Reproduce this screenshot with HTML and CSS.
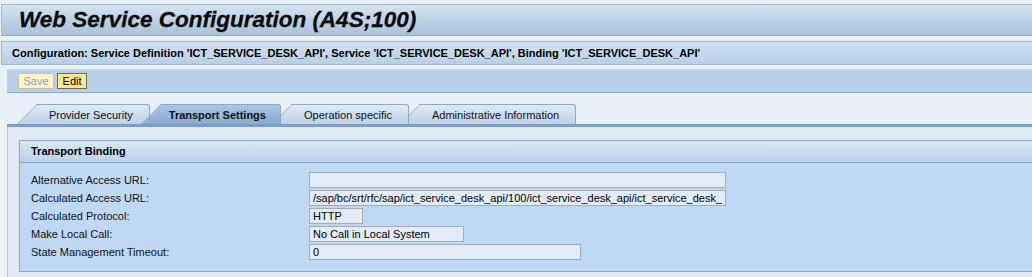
FILE: index.html
```html
<!DOCTYPE html>
<html lang="en">
<head>
  <meta charset="UTF-8" />
  <title>Web Service Configuration (A4S;100)</title>
  <link rel="stylesheet" href="styles.css">
</head>
<body>

  <div class="titlebar">Web Service Configuration (A4S;100)</div>

  <div class="infobar">Configuration: Service Definition 'ICT_SERVICE_DESK_API', Service 'ICT_SERVICE_DESK_API', Binding 'ICT_SERVICE_DESK_API'</div>

  <div class="toolbar">
    <button class="btn disabled" disabled>Save</button>
    <button class="btn">Edit</button>
  </div>

  <div class="tabs">
    <div class="tab">Provider Security</div>
    <div class="tab active">Transport Settings</div>
    <div class="tab">Operation specific</div>
    <div class="tab">Administrative Information</div>
  </div>

  <div class="panel">
    <div class="group">
      <div class="group-head">Transport Binding</div>
      <div class="group-body">
        <label>Alternative Access URL:</label>
        <input class="field wide" type="text" readonly value="">

        <label>Calculated Access URL:</label>
        <input class="field wide" type="text" readonly value="/sap/bc/srt/rfc/sap/ict_service_desk_api/100/ict_service_desk_api/ict_service_desk_api">

        <label>Calculated Protocol:</label>
        <input class="field small" type="text" readonly value="HTTP">

        <label>Make Local Call:</label>
        <input class="field medium" type="text" readonly value="No Call in Local System">

        <label>State Management Timeout:</label>
        <input class="field large" type="text" readonly value="0">
      </div>
    </div>
  </div>

</body>
</html>
```

FILE: styles.css
```css
body {
  margin: 0;
  background-color: #eaf0f7;
  font-family: "Liberation Sans", Arial, sans-serif;
  font-size: 11px;
  color: #000;
  overflow: hidden;
}

.titlebar {
  margin: 4px 0 0 1px;
  height: 30px;
  line-height: 30px;
  padding-left: 17px;
  border: 1px solid #a4b7cb;
  border-right: none;
  border-bottom-color: #94abc3;
  background: linear-gradient(#d5e3f1, #aac2da);
  font-size: 22.5px;
  font-weight: bold;
  font-style: italic;
  color: #0a0a0a;
  -webkit-text-stroke: 0.3px #0a0a0a;
}

.infobar {
  margin: 5px 0 0 1px;
  height: 22px;
  line-height: 22px;
  padding-left: 10px;
  border: 1px solid #a2b6ca;
  border-right: none;
  background: linear-gradient(#d3e2f0, #b9cfe6);
  font-weight: bold;
}

.toolbar {
  margin: 4px 0 0 7px;
  height: 22px;
  padding-left: 11px;
  display: flex;
  align-items: center;
  gap: 3px;
  border-top: 1px solid #c9d9ea;
  border-bottom: 1px solid #8da8c6;
  background-color: #b8cfe7;
}

.btn {
  height: 16px;
  padding: 0 4.5px;
  font: 11px "Liberation Sans", Arial, sans-serif;
  line-height: 14px;
  color: #000;
  background-color: #fde78c;
  border: 1px solid #6f6a55;
  border-radius: 0;
}

.btn.disabled {
  color: #9c9c9c;
  background-color: #fdf4cf;
  border-color: #c8c2a6;
}

/* tab strip */
.tabs {
  margin: 11px 0 0 7px;
  padding-left: 30px;
  display: flex;
  border-bottom: 3px solid #7d9dc6;
}

.tab {
  position: relative;
  z-index: 1;
  height: 19px;
  line-height: 20px;
  margin-left: 11px;
  padding: 0 16px 0 12px;
  border-top: 1px solid #8ea8c7;
  border-right: 1px solid #8ea8c7;
  border-top-right-radius: 3px;
  background: linear-gradient(#e0eaf5, #bdd1e6);
  color: #111;
}

.tab::before {
  content: '';
  position: absolute;
  z-index: -1;
  left: 0;
  top: -1px;
  bottom: 0;
  width: 20px;
  border-top: 1px solid #8ea8c7;
  border-left: 1px solid #8ea8c7;
  background: inherit;
  transform-origin: top left;
  transform: skewX(-45deg);
}

.tab:first-child { margin-left: 0; z-index: 4; }
.tab:nth-child(3) { z-index: 3; }
.tab:nth-child(4) { z-index: 2; }

.tab.active {
  z-index: 5;
  padding: 0 14px 0 8px;
  font-weight: bold;
  background: linear-gradient(#acc6e2, #88aad2);
}

.panel {
  margin-left: 7px;
  padding: 13px 0 5px 11px;
  background-color: #e0eaf5;
  border-left: 1px solid #b4c6da;
}

.group {
  border: 1px solid #8ea7c5;
  border-right: none;
}

.group-head {
  height: 21px;
  line-height: 21px;
  padding-left: 11px;
  font-weight: bold;
  border-bottom: 1px solid #8aa3c1;
  background: linear-gradient(#dce8f4, #bbd1e8);
}

.group-body {
  display: grid;
  grid-template-columns: 278px auto;
  row-gap: 2px;
  align-items: center;
  padding: 9px 0 11px 11px;
  background-color: #bfd8f4;
}

.group-body label {
  color: #111;
}

.field {
  box-sizing: border-box;
  height: 16px;
  padding: 0 3px;
  margin: 0;
  font: 11px "Liberation Sans", Arial, sans-serif;
  color: #000;
  background-color: #e2ecf7;
  border: 1px solid #a7abb0;
  border-radius: 0;
  outline: none;
}

.field.wide { width: 417px; }
.field.small { width: 54px; }
.field.medium { width: 155px; }
.field.large { width: 272px; }
```
